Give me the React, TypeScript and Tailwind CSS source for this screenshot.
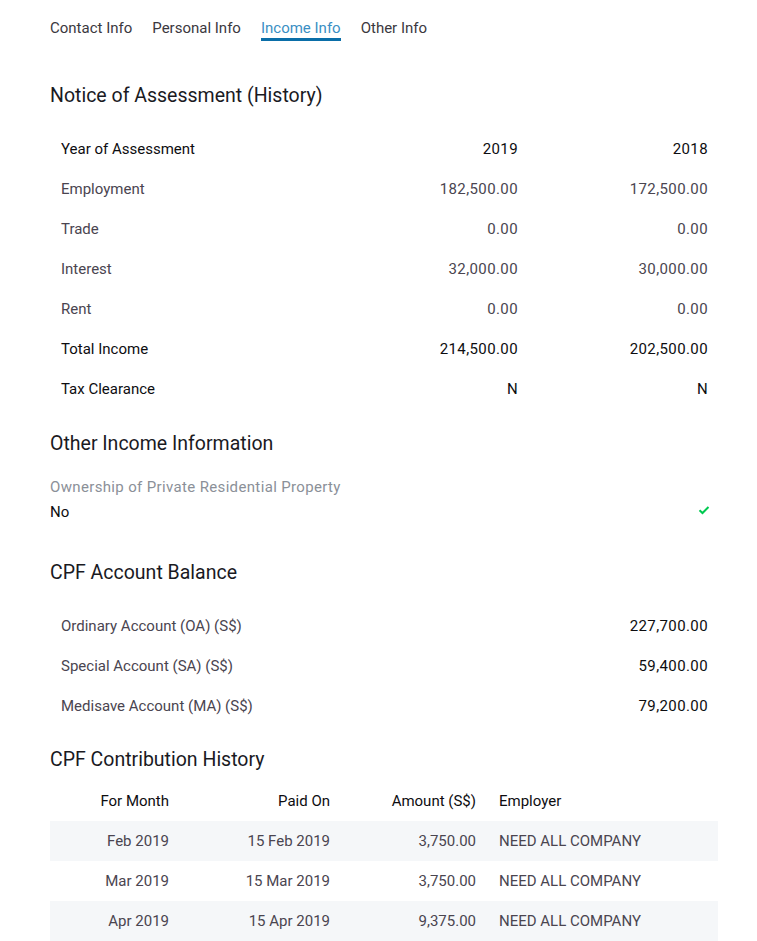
import React from 'react';

const font = { fontFamily: 'Roboto, "Noto Sans", sans-serif' };

const tabs = ['Contact Info', 'Personal Info', 'Income Info', 'Other Info'];

const noa = [
  { label: 'Employment', y2019: '182,500.00', y2018: '172,500.00' },
  { label: 'Trade', y2019: '0.00', y2018: '0.00' },
  { label: 'Interest', y2019: '32,000.00', y2018: '30,000.00' },
  { label: 'Rent', y2019: '0.00', y2018: '0.00' },
];

const balances = [
  { label: 'Ordinary Account (OA) (S$)', value: '227,700.00' },
  { label: 'Special Account (SA) (S$)', value: '59,400.00' },
  { label: 'Medisave Account (MA) (S$)', value: '79,200.00' },
];

const contributions = [
  { month: 'Feb 2019', paid: '15 Feb 2019', amount: '3,750.00', employer: 'NEED ALL COMPANY' },
  { month: 'Mar 2019', paid: '15 Mar 2019', amount: '3,750.00', employer: 'NEED ALL COMPANY' },
  { month: 'Apr 2019', paid: '15 Apr 2019', amount: '9,375.00', employer: 'NEED ALL COMPANY' },
];

const SectionTitle: React.FC<{ children: React.ReactNode; className?: string }> = ({ children, className = '' }) => (
  <h2 className={`text-[19.5px] leading-[28px] text-[#1a1a1f] ${className}`}>{children}</h2>
);

const NoaRow: React.FC<{ label: string; a: string; b: string; strong?: boolean }> = ({ label, a, b, strong }) => (
  <div
    className={`grid grid-cols-[1fr_190px_190px] h-10 items-center pt-[1px] pl-[11px] pr-[10px] text-[15px] ${
      strong ? 'text-[#0d0d10]' : 'text-[#4a4550]'
    }`}
  >
    <span>{label}</span>
    <span className="text-right tracking-[0.4px]">{a}</span>
    <span className="text-right tracking-[0.4px]">{b}</span>
  </div>
);

export default function App() {
  return (
    <div className="bg-white min-h-[941px] w-[757px]" style={font}>
      <div className="ml-[50px] w-[668px]">
        <nav className="flex gap-5 pt-[18px] text-[15px] leading-5">
          {tabs.map((t) => (
            <div
              key={t}
              className={`border-b-[3px] ${
                t === 'Income Info' ? 'border-[#0a6ea8] text-[#3a8fc4]' : 'border-transparent text-[#3b3840]'
              }`}
            >
              {t}
            </div>
          ))}
        </nav>

        <SectionTitle className="mt-[41px]">Notice of Assessment (History)</SectionTitle>
        <div className="mt-[19px]">
          <NoaRow label="Year of Assessment" a="2019" b="2018" strong />
          {noa.map((r) => (
            <NoaRow key={r.label} label={r.label} a={r.y2019} b={r.y2018} />
          ))}
          <NoaRow label="Total Income" a="214,500.00" b="202,500.00" strong />
          <NoaRow label="Tax Clearance" a="N" b="N" strong />
        </div>

        <SectionTitle className="mt-[21px]">Other Income Information</SectionTitle>
        <p className="mt-[19px] text-[15px] leading-5 tracking-[0.35px] text-[#8b9098]">
          Ownership of Private Residential Property
        </p>
        <div className="mt-[5px] flex items-center justify-between pr-[8px] text-[15px] leading-5 text-[#0d0d10]">
          <span>No</span>
          <svg width="12" height="10" viewBox="0 0 12 10" className="-mt-[5px]">
            <path d="M1.5 5.2 L4.5 8 L10.5 2" fill="none" stroke="#00c950" strokeWidth="2" />
          </svg>
        </div>

        <SectionTitle className="mt-[37px]">CPF Account Balance</SectionTitle>
        <div className="mt-[19px]">
          {balances.map((b) => (
            <div
              key={b.label}
              className="flex h-10 items-center justify-between pt-[1px] pl-[11px] pr-[10px] text-[15px]"
            >
              <span className="text-[#4a4550]">{b.label}</span>
              <span className="tracking-[0.4px] text-[#0d0d10]">{b.value}</span>
            </div>
          ))}
        </div>

        <SectionTitle className="mt-5">CPF Contribution History</SectionTitle>
        <div className="mt-[7px] text-[15px]">
          <div className="grid grid-cols-[130px_161px_146px_1fr] h-10 items-center pt-[1px] text-[#0d0d10]">
            <span className="text-right px-[11px]">For Month</span>
            <span className="text-right px-[11px]">Paid On</span>
            <span className="text-right px-[11px]">Amount (S$)</span>
            <span className="px-[12px]">Employer</span>
          </div>
          {contributions.map((c, i) => (
            <div
              key={c.month}
              className={`grid grid-cols-[130px_161px_146px_1fr] h-10 items-center pt-[1px] text-[#4a4550] ${
                i % 2 === 0 ? 'bg-[#f5f7f9]' : ''
              }`}
            >
              <span className="text-right px-[11px]">{c.month}</span>
              <span className="text-right px-[11px]">{c.paid}</span>
              <span className="text-right px-[11px]">{c.amount}</span>
              <span className="px-[12px]">{c.employer}</span>
            </div>
          ))}
        </div>
      </div>
    </div>
  );
}
